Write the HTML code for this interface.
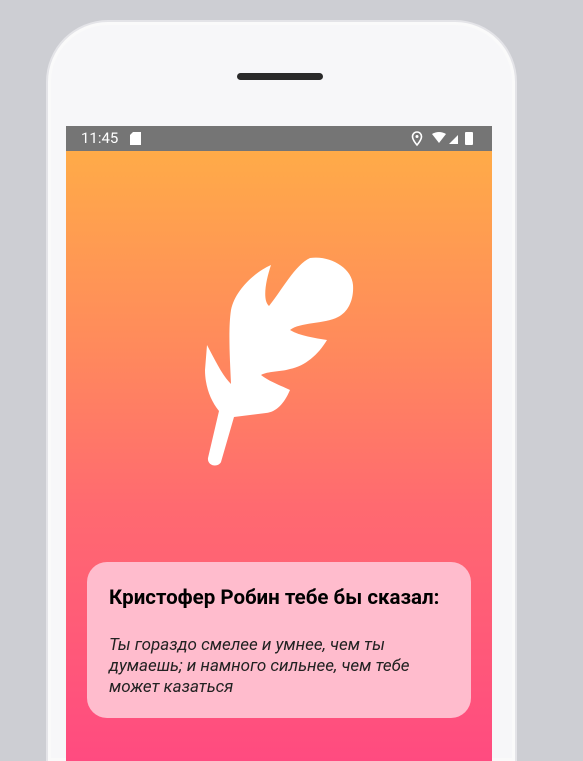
<!DOCTYPE html>
<html><head><meta charset="utf-8"><style>
html,body{margin:0;padding:0;overflow:hidden;width:583px;height:761px}
body{background:#cdced3;position:relative;font-family:"Roboto","Liberation Sans",sans-serif}
.clip{position:absolute;left:0;top:0;width:583px;height:761px;overflow:hidden}
.phone{position:absolute;left:46px;top:20px;width:471px;height:741px;background:#f7f7f9;border-radius:62px 62px 0 0;border:2px solid #e4e4e8;border-bottom:none;box-sizing:border-box;box-shadow:inset 0 0 0 3px #fafafa}
.spk{position:absolute;left:237px;top:73px;width:86px;height:7px;background:#2a2a2a;border-radius:4px}
.screen{position:absolute;left:66px;top:126px;width:426px;height:635px;background:linear-gradient(#ffab48 25px,#ff8a5c 220px,#ff6a70 380px,#ff4b80 635px)}
.sb{position:absolute;left:0;top:0;width:426px;height:25px;background:#757575;color:#fff;font-size:15px}
.card{position:absolute;left:21px;top:436px;width:384px;height:156px;background:#ffbccd;border-radius:20px}
.t{position:absolute;left:22px;top:24px;font-weight:bold;font-size:20.5px;color:#000;white-space:nowrap}
.q{position:absolute;left:22px;top:73px;font-style:italic;font-size:17px;line-height:21px;color:#222;width:310px}
</style></head><body><div class="clip">
<div class="phone"></div>
<div class="spk"></div>
<div class="screen">
<div class="sb"><span style="position:absolute;left:15px;top:3px">11:45</span>
<svg style="position:absolute;left:64px;top:6px" width="11" height="13"><path d="M3 0H11V13H0V3Z" fill="#fff"/></svg>
<svg style="position:absolute;left:345px;top:5px" width="70" height="16"><path d="M6 1a4.5 4.5 0 0 0-4.5 4.5C1.5 9 6 14 6 14s4.5-5 4.5-8.5A4.5 4.5 0 0 0 6 1z" fill="none" stroke="#fff" stroke-width="1.6"/><circle cx="6" cy="5.5" r="1.5" fill="#fff"/><path d="M21 3Q28-1 35 3L28 12Z" fill="#fff"/><path d="M38 13L47 4V13Z" fill="#fff"/><rect x="54" y="1" width="8" height="13" rx="1" fill="#fff"/></svg>
</div>
<div class="card"><div class="t">Кристофер Робин тебе бы сказал:</div>
<div class="q">Ты гораздо смелее и умнее, чем ты думаешь; и намного сильнее, чем тебе может казаться</div></div>
</div>
<svg style="position:absolute;left:0;top:0" width="583" height="761"><path d="M310,258 C330,255 352,268 353,285 C354,300 348,312 338,317 C325,324 300,322 290,330 C300,336 315,338 327,340 C318,355 305,366 290,369 C280,372 268,371 261,375 C270,382 282,386 290,390 C284,404 276,412 266,413 L234,417 L221,462 C218,468 207,466 208,458 L219,411 C210,400 205,385 205,370 L207,345 C215,360 222,375 231,384 C230,360 228,330 231,310 C235,290 255,272 271,265 C266,280 262,300 269,306 C282,290 295,265 310,258 Z" fill="#fff"/></svg>
</div></body></html>
